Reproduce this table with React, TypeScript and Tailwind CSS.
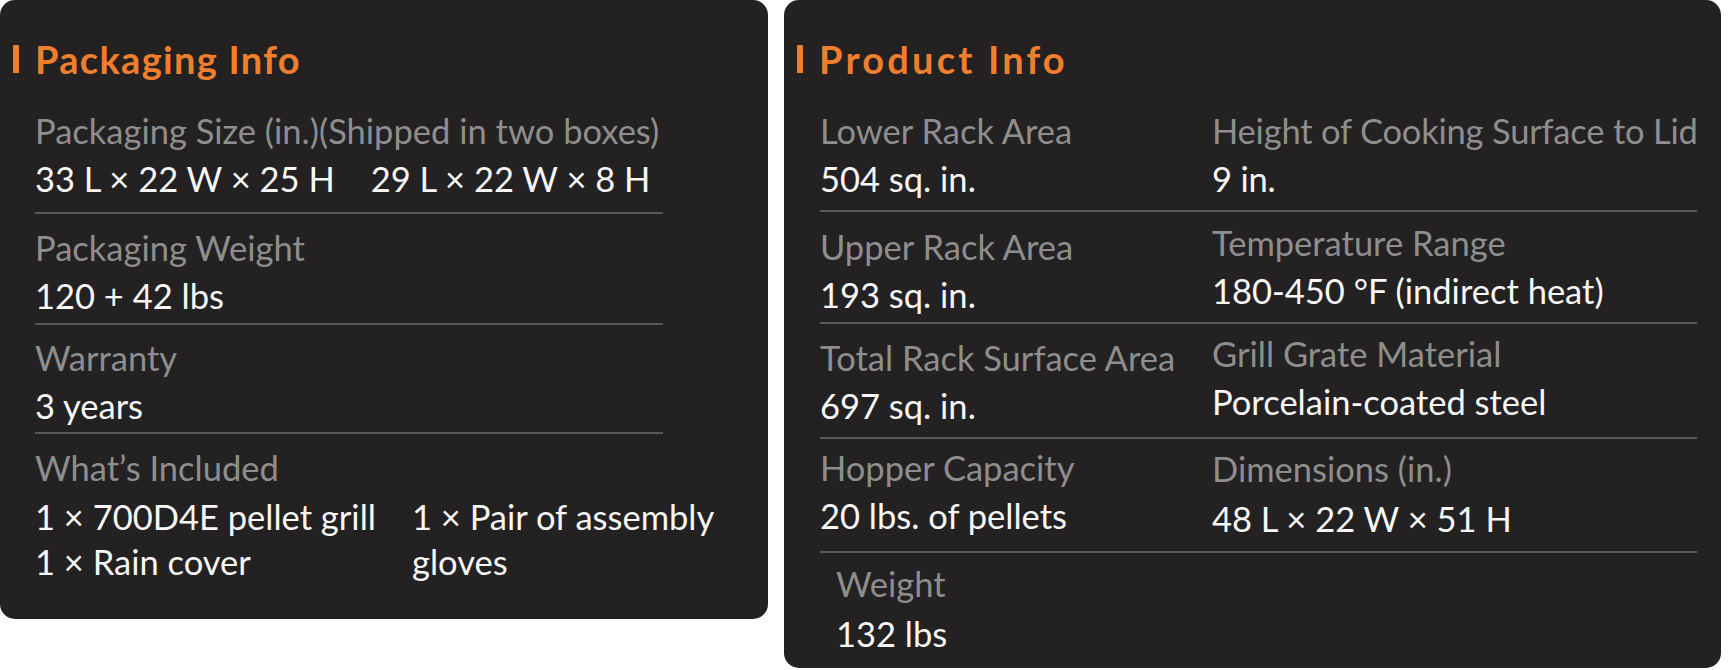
import React from 'react';

const font = { fontFamily: 'Lato, "Open Sans", sans-serif' };

function Header({ title, wide }: { title: string; wide?: boolean }) {
  return (
    <div className="flex items-center h-[42px] mt-[38px] pl-[13px]">
      <div className="w-[6px] h-[28px] bg-[#ef7f2d]" />
      <div
        className={`ml-[16px] text-[38px] font-bold text-[#ef7f2d] ${wide ? 'tracking-[3.2px]' : 'tracking-[1.3px]'}`}
      >
        {title}
      </div>
    </div>
  );
}

function Label({ children }: { children: React.ReactNode }) {
  return <div className="text-[34.5px] leading-[48px] text-[#8e8e8e] whitespace-nowrap">{children}</div>;
}

function Value({ children }: { children: React.ReactNode }) {
  return <div className="text-[34.5px] leading-[48px] text-[#f7f7f7] whitespace-nowrap">{children}</div>;
}

function Divider() {
  return <div className="h-[2px] bg-[#595959]" />;
}

function PackagingInfo() {
  return (
    <div className="w-[768px] h-[619px] shrink-0 rounded-[15px] bg-[#232122]">
      <Header title="Packaging Info" />
      <div className="pl-[35px] w-[663px]">
        <div className="pt-[27px] pb-[9px]">
          <Label>Packaging Size (in.)(Shipped in two boxes)</Label>
          <Value>
            <span>33 L × 22 W × 25 H</span>
            <span className="ml-[36px]">29 L × 22 W × 8 H</span>
          </Value>
        </div>
        <Divider />
        <div className="pt-[10px] pb-[3px]">
          <Label>Packaging Weight</Label>
          <Value>120 + 42 lbs</Value>
        </div>
        <Divider />
        <div className="pt-[9px] pb-[2px]">
          <Label>Warranty</Label>
          <Value>3 years</Value>
        </div>
        <Divider />
        <div className="pt-[10px]">
          <Label>What’s Included</Label>
          <div className="flex text-[34.5px] leading-[45px] text-[#f7f7f7] mt-[2px]">
            <div className="w-[377px] shrink-0 whitespace-nowrap">
              <div>1 × 700D4E pellet grill</div>
              <div>1 × Rain cover</div>
            </div>
            <div className="whitespace-nowrap">
              <div>1 × Pair of assembly</div>
              <div>gloves</div>
            </div>
          </div>
        </div>
      </div>
    </div>
  );
}

function Cell({ label, value, shift }: { label: string; value: string; shift?: boolean }) {
  return (
    <div className={shift ? '-mt-[4px]' : ''}>
      <Label>{label}</Label>
      <Value>{value}</Value>
    </div>
  );
}

function ProductInfo() {
  return (
    <div className="w-[937px] h-[668px] shrink-0 rounded-[15px] bg-[#232122]">
      <Header title="Product Info" wide />
      <div className="pl-[36px] w-[913px]">
        <div className="grid grid-cols-[392px_1fr] pt-[27px] pb-[7px]">
          <Cell label="Lower Rack Area" value="504 sq. in." />
          <div className="tracking-[-0.2px]">
            <Cell label="Height of Cooking Surface to Lid" value="9 in." />
          </div>
        </div>
        <Divider />
        <div className="grid grid-cols-[392px_1fr] pt-[11px] pb-[3px]">
          <Cell label="Upper Rack Area" value="193 sq. in." />
          <Cell label="Temperature Range" value="180-450 °F (indirect heat)" shift />
        </div>
        <Divider />
        <div className="grid grid-cols-[392px_1fr] pt-[10px] pb-[7px]">
          <Cell label="Total Rack Surface Area" value="697 sq. in." />
          <Cell label="Grill Grate Material" value="Porcelain-coated steel" shift />
        </div>
        <Divider />
        <div className="grid grid-cols-[392px_1fr] pt-[5px] pb-[8px]">
          <Cell label="Hopper Capacity" value="20 lbs. of pellets" />
          <div className="mt-[1px]">
            <Label>Dimensions (in.)</Label>
            <div className="mt-[2px]">
              <Value>48 L × 22 W × 51 H</Value>
            </div>
          </div>
        </div>
        <Divider />
        <div className="pl-[16px] pt-[7px]">
          <Label>Weight</Label>
          <div className="mt-[2px]">
            <Value>132 lbs</Value>
          </div>
        </div>
      </div>
    </div>
  );
}

export default function App() {
  return (
    <div className="w-[1732px] h-[670px] bg-white flex items-start gap-[16px]" style={font}>
      <PackagingInfo />
      <ProductInfo />
    </div>
  );
}
